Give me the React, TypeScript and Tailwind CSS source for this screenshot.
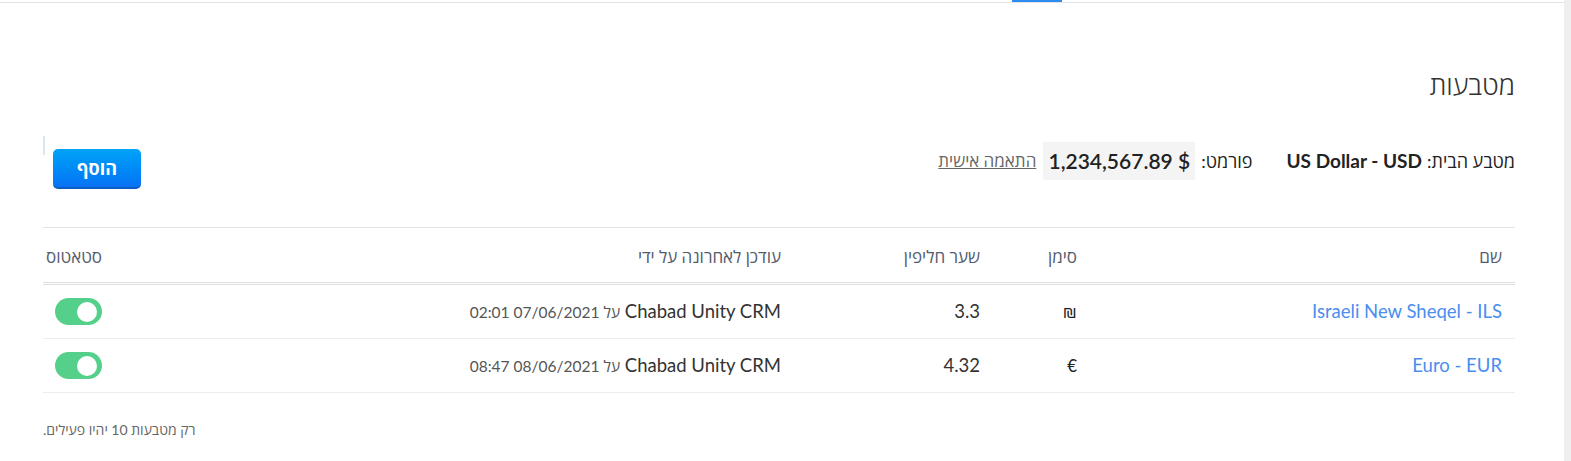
import { Fragment } from "react";

const FONT = { fontFamily: "Lato, 'Open Sans', sans-serif" };

const rows = [
  {
    name: "Israeli New Sheqel - ILS",
    symbol: "₪",
    rate: "3.3",
    by: "Chabad Unity CRM",
    at: "07/06/2021 02:01",
  },
  {
    name: "Euro - EUR",
    symbol: "€",
    rate: "4.32",
    by: "Chabad Unity CRM",
    at: "08/06/2021 08:47",
  },
];

const GRID = "grid grid-cols-[425px_97px_199px_1fr_72px]";

function Toggle() {
  return (
    <span className="inline-flex h-[27px] w-[47px] items-center justify-start rounded-full bg-[#54d08a] pr-[5px]">
      <span className="h-[20px] w-[20px] rounded-full bg-white" />
    </span>
  );
}

export default function App() {
  return (
    <div className="flex min-h-[461px] bg-white text-[#333]" style={FONT}>
      <div className="flex-1">
        <div className="relative h-[3px] border-b border-[#e3e3e3]">
          <span className="absolute top-0 left-[1012px] h-[2px] w-[50px] bg-[#2d8cf0]" />
        </div>
        <div dir="rtl" className="pr-[49px] pl-[43px]">
          <h1 className="mt-[65px] text-[27px] leading-[34px] font-light text-[#333]">
            מטבעות
          </h1>

          <div className="mt-[29px] flex h-[60px] items-center">
            <div className="flex items-center text-[18px] text-[#222]">
              <span>מטבע הבית:</span>
              <span className="mr-[5px] text-[19px] font-bold">US Dollar - USD</span>
            </div>
            <span className="mr-[34px] text-[18px] text-[#222]">פורמט:</span>
            <span
              dir="ltr"
              className="mr-[6px] flex h-[38px] w-[152px] items-center justify-center bg-[#f4f4f4] text-[21px] font-semibold text-[#222]"
            >
              1,234,567.89 $
            </span>
            <a className="mr-[7px] text-[17px] text-[#666] underline">
              התאמה אישית
            </a>
            <div className="mr-auto flex items-start self-stretch">
              <button className="mt-[18px] ml-[8px] h-[40px] w-[88px] rounded-[5px] border-b-2 border-[#0a5ec4] bg-gradient-to-b from-[#03a3f7] to-[#0a72f5] text-[18px] font-bold text-white">
                הוסף
              </button>
              <span className="mt-[5px] h-[19px] w-[2px] bg-[#dde6f0]" />
            </div>
          </div>

          <div className="mt-[36px] border-t border-[#e3e3e3]">
            <div
              className={`${GRID} h-[57px] items-center border-b-[3px] border-double border-[#dedede] pt-[3px] text-[17px] text-[#535b6c]`}
            >
              <div className="pr-[13px]">שם</div>
              <div className="pr-[13px]">סימן</div>
              <div className="pr-[13px]">שער חליפין</div>
              <div className="pr-[13px]">עודכן לאחרונה על ידי</div>
              <div className="pr-[13px]">סטאטוס</div>
            </div>
            {rows.map((row) => (
              <Fragment key={row.name}>
                <div
                  className={`${GRID} h-[54px] items-center border-b border-[#ececec] text-[18.5px]`}
                >
                  <div className="pr-[13px] text-[#4a8ef0]">{row.name}</div>
                  <div className="pr-[13px] text-[17px] text-[#222]">
                    {row.symbol}
                  </div>
                  <div dir="ltr" className="pr-[13px] text-right text-[#333]">
                    {row.rate}
                  </div>
                  <div className="pr-[13px]">
                    <span className="text-[#333]">{row.by}</span>{" "}
                    <span className="text-[15.5px] text-[#555]">
                      על {row.at}
                    </span>
                  </div>
                  <div className="flex pr-[13px]">
                    <Toggle />
                  </div>
                </div>
              </Fragment>
            ))}
          </div>

          <p className="mt-[27px] text-left text-[14px] leading-[20px] text-[#666]">
            <span dir="rtl">רק מטבעות 10 יהיו פעילים.</span>
          </p>
        </div>
      </div>
      <div className="w-[7px] bg-[#efefef]" />
    </div>
  );
}
